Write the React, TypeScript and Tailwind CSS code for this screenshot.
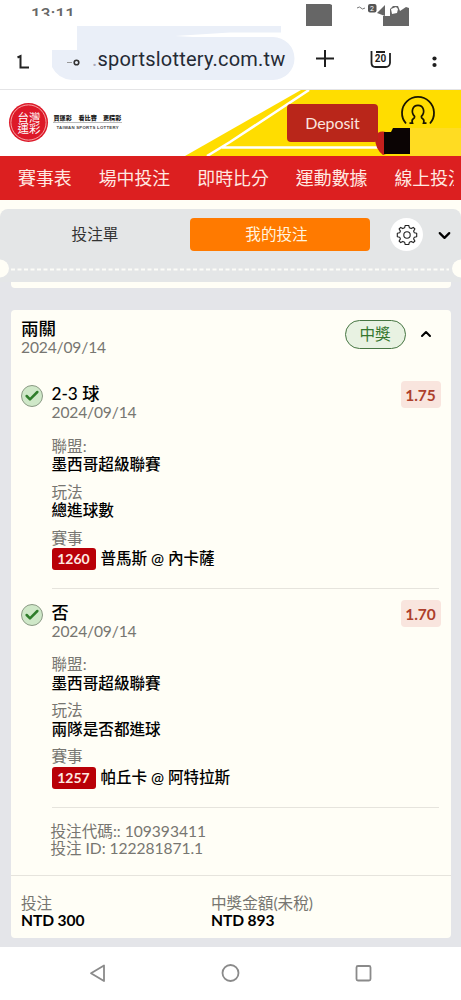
import { ChevronDown, ChevronUp, Check } from 'lucide-react';

const navItems = ['賽事表', '場中投注', '即時比分', '運動數據', '線上投注'];

interface Leg {
  pick: string;
  date: string;
  odds: string;
  league: string;
  market: string;
  code: string;
  match: string;
}

const legs: Leg[] = [
  {
    pick: '2-3 球',
    date: '2024/09/14',
    odds: '1.75',
    league: '墨西哥超級聯賽',
    market: '總進球數',
    code: '1260',
    match: '普馬斯 @ 內卡薩',
  },
  {
    pick: '否',
    date: '2024/09/14',
    odds: '1.70',
    league: '墨西哥超級聯賽',
    market: '兩隊是否都進球',
    code: '1257',
    match: '帕丘卡 @ 阿特拉斯',
  },
];

function StatusBar() {
  return (
    <div className="flex h-[26px] justify-between pl-[31px] pr-[51px]">
      <div className="mt-2 h-[8px] overflow-hidden font-['Roboto'] text-[17px] font-medium leading-[13px] tracking-[0.2px] text-[#666]">
        13:11
      </div>
      <svg width="104" height="26" viewBox="307 0 104 26">
        <path d="M307 4h24l2 1v21h-26z" fill="#666" />
        <path d="M358 8q3-2 4 0t4 0" fill="none" stroke="#777" />
        <rect x="369" y="4" width="8.500" height="8.500" rx="2" fill="#555" />
        <text x="371" y="11" fontSize="7" fontFamily="Roboto" fill="#fff">2</text>
        <path d="M378 13l8-8v11z" fill="#666" />
        <path d="M384 16h7V9l3-3h5l2 5 6-4 3 1v18h-26z" fill="#666" />
        <path d="M392 9l5-2 2 2-1 4-5 1z" fill="#fff" />
      </svg>
    </div>
  );
}

function BrowserBar() {
  return (
    <div className="relative flex h-16 items-start border-b border-[#e4e4e6]">
      <svg className="absolute left-0 top-0" width="461" height="62" viewBox="0 26 461 62">
        <path d="M77 26H281v6.500H230L175 36l18 1H273a21.500 21.500 0 0 1 0 43H72q-14-1-20-13V50H77z" fill="#eaeff8" />
        <path d="M17.500 57.500l3-1.500v11.500h8.500" fill="none" stroke="#222" strokeWidth="2" />
        <path d="M67 62.500h5" stroke="#999" strokeWidth="1" />
        <circle cx="76.500" cy="62.500" r="2.300" fill="none" stroke="#333" strokeWidth="1.600" />
        <path d="M316 58.500h18M325 50v17" stroke="#1f1f1f" strokeWidth="2" />
        <path d="M371.500 51v12q0 4 4 4h10q4 0 4.500-4V53M376 52h9" fill="none" stroke="#1f1f1f" strokeWidth="1.800" />
        <text x="374.800" y="62.300" fontSize="10" fontWeight="700" fontFamily="Roboto" fill="#1f1f1f">20</text>
        <circle cx="434.500" cy="58.500" r="2.100" fill="#1f1f1f" />
        <circle cx="434.500" cy="65" r="2.100" fill="#1f1f1f" />
      </svg>
      <span className="relative ml-[92px] mt-[21px] whitespace-nowrap font-['Roboto'] text-[20px] leading-6 tracking-[0.2px] text-[#252a35]">
        <span className="text-[#aab]">.</span>sportslottery.com.tw
      </span>
    </div>
  );
}

function SiteHeader() {
  return (
    <header className="relative flex h-[66px] bg-white">
      <svg className="absolute inset-0" width="461" height="66" viewBox="0 90 461 66">
        <path d="M301 90H461v66H185z" fill="#fd0" />
        <path d="M309 90L230 142L207 156M222 147.500H390" stroke="#fff" strokeWidth="2.600" fill="none" />
        <path d="M410 128h51v28h-51z" fill="#ffdc22" />
        <path d="M375 137q3-7 11-5v22l-3 1q-8-6-8-18z" fill="#c41f1c" />
        <path d="M384 132h7l2-4h17v26h-26z" fill="#0b0404" />
        <path d="M406 123.500A16 16 0 1 1 430 123.500" fill="none" stroke="#1a1600" strokeWidth="1.800" />
        <path
          d="M409.500 123.200H412.500C410.500 117.500 415 120 414.600 116.300C410.300 112 412.600 105.300 418 105.300S425.700 112 421.400 116.300C421 120 425.500 117.500 423.500 123.200H426.500"
          fill="none"
          stroke="#1a1600"
          strokeWidth="1.700"
        />
        <circle cx="28.500" cy="122.500" r="19.500" fill="#dd1828" />
        <circle cx="28.500" cy="122.500" r="17.600" fill="none" stroke="#f5a5a5" strokeWidth="1" />
        <g fill="#fff" fontFamily="'Noto Sans CJK TC', sans-serif" fontSize="11.500">
          <text x="17.500" y="121.500">台灣</text>
          <text x="17.500" y="133">運彩</text>
        </g>
        <g fill="#222" fontFamily="'Noto Sans CJK TC', sans-serif" fontWeight="900" fontSize="6.100">
          <text x="53.500" y="119.700">買運彩</text>
          <text x="78.500" y="119.700">看比賽</text>
          <text x="103" y="119.700">更精彩</text>
        </g>
        <path d="M53 122.500h69" stroke="#aaa" strokeWidth=".8" />
        <text x="56.500" y="129" textLength="62" fontSize="4.300" fontFamily="Liberation Sans" fontWeight="700" fill="#444">
          TAIWAN SPORTS LOTTERY
        </text>
      </svg>
      <button className="relative ml-[287px] mt-[14px] h-[38px] w-[91px] rounded bg-[#b9261a] text-[16px] leading-[38px] tracking-[-0.1px] text-[#fbe4df]">
        Deposit
      </button>
    </header>
  );
}

function GearIcon() {
  return (
    <svg width="22" height="22" viewBox="-11 -11 22 22" fill="none" stroke="#222" strokeWidth="1.100">
      <path
        d="M-1.800 -9.500H1.800L2.400 -7.200L4.200 -6.400L6.300 -7.600L7.900 -6L6.600 -3.900L7.300 -2.200L9.700 -1.700V1.700L7.300 2.200L6.600 3.900L7.900 6L6.300 7.600L4.200 6.400L2.400 7.200L1.800 9.500H-1.800L-2.400 7.200L-4.200 6.400L-6.300 7.600L-7.900 6L-6.600 3.900L-7.300 2.200L-9.700 1.700V-1.700L-7.300 -2.200L-6.600 -3.900L-7.900 -6L-6.300 -7.600L-4.200 -6.400L-2.400 -7.200Z"
        strokeLinejoin="round"
      />
      <circle r="3.200" />
    </svg>
  );
}

function Tabs() {
  return (
    <div className="relative h-[73px] rounded-t-lg bg-[#e4e6e7]">
      <div className="flex items-center pt-[9px]">
        <button className="w-[190px] pt-px text-center text-[15.600px] text-[#333]">投注單</button>
        <button className="h-[33px] w-[180px] rounded bg-[#ff7a00] pr-[7px] pt-px text-[15.600px] text-[#fff3df]">我的投注</button>
        <div className="ml-5 flex size-[33px] items-center justify-center rounded-full bg-white">
          <GearIcon />
        </div>
        <ChevronDown className="ml-[12px] mt-[2px] text-black" size={19} strokeWidth={2.8} />
      </div>
      <svg className="absolute left-0 top-[50px]" width="461" height="20" viewBox="0 0 461 20">
        <circle cx="0" cy="9.500" r="9" fill="#fffef6" />
        <circle cx="461" cy="9.500" r="9" fill="#fffef6" />
        <path d="M11 10.500H449" stroke="#fcfcf8" strokeWidth="2" strokeDasharray="4 2.500" />
      </svg>
    </div>
  );
}

function Field({ label, value }: { label: string; value: string }) {
  return (
    <div className="mb-[8.500px]">
      <p className="h-[18.500px] leading-[18px] text-[#777671]">{label}</p>
      <p className="h-[19px] font-medium leading-[19px]">{value}</p>
    </div>
  );
}

function LegRow({ leg }: { leg: Leg }) {
  return (
    <section className="flex h-[218.500px] pl-2.5 pr-[9px] pt-[14.500px]">
      <span className="flex size-[22px] shrink-0 items-center justify-center rounded-full border border-[#8a9a84] bg-[#cfe8c8]">
        <Check size={16} strokeWidth={3.8} className="text-[#2f7d2b]" />
      </span>
      <div className="ml-[9px] mr-[3px] flex-1 border-b border-[#e6e4dd]">
        <div className="flex justify-between">
          <div>
            <h3 className="h-[18px] text-[17.200px] font-medium leading-[18px]">{leg.pick}</h3>
            <p className="h-[18px] leading-[18px] tracking-[-0.15px] text-[#777671]">{leg.date}</p>
          </div>
          <span className="-mr-[2px] -mt-[4px] h-[27px] w-10 rounded bg-[#f9e5de] text-center text-[15.500px] font-bold leading-[28px] text-[#ad3f2c]">
            {leg.odds}
          </span>
        </div>
        <div className="mt-[15.500px]">
          <Field label="聯盟:" value={leg.league} />
          <Field label="玩法" value={leg.market} />
          <p className="h-[19px] leading-[19px] text-[#777671]">賽事</p>
          <div className="flex h-[23px] items-center">
            <span className="h-[22px] w-11 rounded-[3px] bg-[#b90007] text-center text-[14px] font-bold leading-[22px] text-[#ffe9e2]">
              {leg.code}
            </span>
            <span className="ml-[5px] whitespace-pre font-medium tracking-[-0.05px]">{leg.match}</span>
          </div>
        </div>
      </div>
    </section>
  );
}

function BetCard() {
  return (
    <article className="mx-auto mt-[22px] h-[628px] w-[440px] rounded bg-[#fffef6] text-[15.600px] text-black">
      <div className="flex h-[60.500px] items-start pl-[10.500px] pr-2.5 pt-[10px]">
        <div className="flex-1">
          <h2 className="h-[18px] text-[17.500px] font-medium leading-[18px]">兩關</h2>
          <p className="h-[18px] leading-[18px] tracking-[-0.15px] text-[#777671]">2024/09/14</p>
        </div>
        <span className="h-[29px] w-[61px] rounded-full border border-[#467542] bg-[#e8f2e2] text-center leading-[27px] text-[#35772f]">
          中獎
        </span>
        <ChevronUp className="ml-[12px] mr-[7px] mt-[6px]" size={16} strokeWidth={3} />
      </div>
      {legs.map((leg) => (
        <LegRow key={leg.code} leg={leg} />
      ))}
      <div className="h-[68px] border-b border-[#e6e4dd] pl-10 pt-[15.500px] leading-[17px] text-[#777671]">
        <p>投注代碼:: 109393411</p>
        <p className="tracking-[-0.05px]">投注 ID: 122281871.1</p>
      </div>
      <div className="flex pl-[10.500px] pt-[19px] leading-[17px]">
        <div className="w-[190px]">
          <p className="text-[#777671]">投注</p>
          <p className="font-bold tracking-[-0.1px]">NTD 300</p>
        </div>
        <div>
          <p className="text-[#777671]">中獎金額(未稅)</p>
          <p className="font-bold tracking-[-0.1px]">NTD 893</p>
        </div>
      </div>
    </article>
  );
}

function SystemNav() {
  return (
    <div className="h-[53px] bg-white">
      <svg width="461" height="53" viewBox="0 947 461 53" fill="none" stroke="#8a8a8a" strokeWidth="1.800">
        <path d="M104 965.500v15.500l-13-7.700z" strokeLinejoin="round" />
        <circle cx="230.500" cy="973" r="8" />
        <rect x="356.500" y="966" width="14" height="14.500" rx="1.500" />
      </svg>
    </div>
  );
}

export default function App() {
  return (
    <div className="h-[1000px] w-[461px] overflow-hidden bg-white font-['Lato','Noto_Sans_CJK_TC',sans-serif]">
      <StatusBar />
      <BrowserBar />
      <SiteHeader />
      <nav className="h-[44px] bg-[#dc1f20] pr-[7px]">
        <div className="flex h-full items-center gap-[27px] overflow-hidden pl-[18px] pt-px">
          {navItems.map((item) => (
            <a key={item} className="shrink-0 text-[17.900px] text-[#ffe9e2]">
              {item}
            </a>
          ))}
        </div>
      </nav>
      <main className="h-[747px] bg-[#fffef6] pt-[9px]">
        <Tabs />
        <div className="h-[665px] bg-[#e4e5e9]">
          <div className="mx-auto h-[6px] w-[440px] rounded-b bg-[#fffef6]" />
          <BetCard />
        </div>
      </main>
      <SystemNav />
    </div>
  );
}
